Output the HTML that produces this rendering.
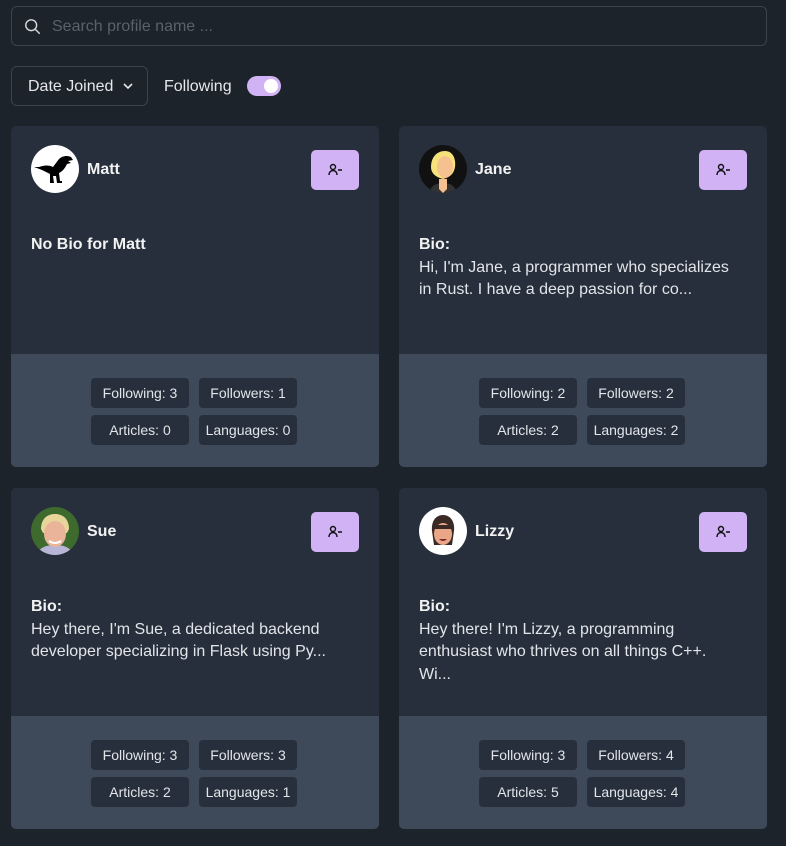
<!DOCTYPE html>
<html><head><meta charset="utf-8"><style>
*{box-sizing:border-box;margin:0;padding:0}
body{width:786px;height:846px;background:#1d232a;font-family:"Liberation Sans",sans-serif;color:#e5e7eb;position:relative;overflow:hidden}
.search{position:absolute;left:11px;top:6px;width:756px;height:40px;border:1px solid #3b434d;border-radius:6px}
.search svg{position:absolute;left:12px;top:11px}
.search span{position:absolute;left:40px;top:11px;font-size:16px;color:#59616b}
.dd{position:absolute;left:11px;top:66px;width:137px;height:40px;border:1px solid #3b434d;border-radius:6px;font-size:16px;padding:11px 0 0 16px;color:#e5e7eb}
.dd svg{position:absolute;left:111px;top:16px}
.fl{position:absolute;left:164px;top:78px;font-size:16px}
.tg{position:absolute;left:247px;top:76px;width:34px;height:20px;border-radius:10px;background:#d1b3f5}
.tg i{position:absolute;right:3px;top:3px;width:14px;height:14px;border-radius:50%;background:#fff}
.card{position:absolute;width:368px;height:341px;background:#262f3b;border-radius:5px;overflow:hidden}
.av{position:absolute;left:20px;top:19px;width:48px;height:48px;border-radius:50%;overflow:hidden}
.nm{position:absolute;left:76px;top:35px;font-size:16px;font-weight:bold;color:#f2f2f2}
.btn{position:absolute;left:300px;top:24px;width:48px;height:40px;border-radius:5px;background:#d1b3f5}
.btn svg{position:absolute;left:16px;top:12px}
.bio{position:absolute;left:20px;top:108px;width:320px;font-size:16px;line-height:22.5px;color:#e2e5e9}
.bio b{color:#f2f2f2}
.ft{position:absolute;left:0;top:228px;width:368px;height:113px;background:#3e4a5a}
.p{position:absolute;width:98px;height:30px;background:#262f3b;border-radius:4px;font-size:14px;text-align:center;line-height:30px;color:#e2e5e9}
</style></head><body>
<div class="search"><svg width="18" height="18" viewBox="0 0 20 20" fill="none" stroke="#d6d9dd" stroke-width="1.6"><circle cx="8" cy="8" r="6"/><path d="M12.5 12.5l5 5"/></svg><span>Search profile name ...</span></div>
<div class="dd">Date Joined<svg width="10" height="7" viewBox="0 0 10 7" fill="none" stroke="#e5e7eb" stroke-width="1.6"><path d="M1 1l4 4 4-4"/></svg></div>
<div class="fl">Following</div><div class="tg"><i></i></div>

<div class="card" style="left:11px;top:126px">
<div class="av" style="background:#fff"><svg width="48" height="48" viewBox="0 0 48 48"><path d="M8 22c6-2 10-2 14 0l6-8c3-3 8-4 12-2l2 3-5 1 3 2-4 1c-2 4-4 7-8 9l1 8h2l0 2h-5l-1-7-3 0 1 7h-4l0-9c-4-2-7-4-16-7z" fill="#000"/></svg></div>
<div class="nm">Matt</div><div class="btn"><svg width="16" height="16" viewBox="0 0 16 16" fill="none" stroke="#111" stroke-width="1.4"><circle cx="6" cy="5" r="2.5"/><path d="M2 13c0-3 2-4.5 4-4.5s4 1.5 4 4.5M11 8h4"/></svg></div>
<div class="bio"><b>No Bio for Matt</b></div>
<div class="ft"><div class="p" style="left:80px;top:24px">Following: 3</div><div class="p" style="left:188px;top:24px">Followers: 1</div><div class="p" style="left:80px;top:61px">Articles: 0</div><div class="p" style="left:188px;top:61px">Languages: 0</div></div>
</div>

<div class="card" style="left:399px;top:126px">
<div class="av" style="background:#111"><svg width="48" height="48" viewBox="0 0 48 48"><path d="M10 48c2-8 8-10 14-10s12 2 14 10z" fill="#333"/><path d="M20 34h8v10l-4 4-4-4z" fill="#f5c18f"/><path d="M12 22c0-10 6-16 14-16s11 8 10 16c-1 6-4 10-12 12-8-2-12-6-12-12z" fill="#f6e27a"/><ellipse cx="26" cy="22" rx="8" ry="11" fill="#f5c18f"/></svg></div>
<div class="nm">Jane</div><div class="btn"><svg width="16" height="16" viewBox="0 0 16 16" fill="none" stroke="#111" stroke-width="1.4"><circle cx="6" cy="5" r="2.5"/><path d="M2 13c0-3 2-4.5 4-4.5s4 1.5 4 4.5M11 8h4"/></svg></div>
<div class="bio"><b>Bio:</b><br>Hi, I'm Jane, a programmer who specializes in Rust. I have a deep passion for co...</div>
<div class="ft"><div class="p" style="left:80px;top:24px">Following: 2</div><div class="p" style="left:188px;top:24px">Followers: 2</div><div class="p" style="left:80px;top:61px">Articles: 2</div><div class="p" style="left:188px;top:61px">Languages: 2</div></div>
</div>

<div class="card" style="left:11px;top:488px">
<div class="av" style="background:#3e6a2e"><svg width="48" height="48" viewBox="0 0 48 48"><path d="M6 48c2-8 10-10 18-10s16 2 18 10z" fill="#b8b6d8"/><path d="M10 22c0-10 6-15 14-15s14 5 14 15l-2 4H12z" fill="#e8d59a"/><ellipse cx="24" cy="27" rx="11" ry="13" fill="#eab49a"/><path d="M18 34q6 4 12 0" stroke="#fff" stroke-width="2" fill="none"/></svg></div>
<div class="nm">Sue</div><div class="btn"><svg width="16" height="16" viewBox="0 0 16 16" fill="none" stroke="#111" stroke-width="1.4"><circle cx="6" cy="5" r="2.5"/><path d="M2 13c0-3 2-4.5 4-4.5s4 1.5 4 4.5M11 8h4"/></svg></div>
<div class="bio"><b>Bio:</b><br>Hey there, I'm Sue, a dedicated backend developer specializing in Flask using Py...</div>
<div class="ft"><div class="p" style="left:80px;top:24px">Following: 3</div><div class="p" style="left:188px;top:24px">Followers: 3</div><div class="p" style="left:80px;top:61px">Articles: 2</div><div class="p" style="left:188px;top:61px">Languages: 1</div></div>
</div>

<div class="card" style="left:399px;top:488px">
<div class="av" style="background:#fff"><svg width="48" height="48" viewBox="0 0 48 48"><path d="M13 24c-1-10 4-16 11-16s12 6 11 16l-2 14H15z" fill="#3a2a26"/><ellipse cx="24" cy="27" rx="9" ry="11" fill="#e9a788"/><path d="M15 18h18v4H15z" fill="#3a2a26"/><path d="M20 32q4 4 8 0z" fill="#7a2a2a"/></svg></div>
<div class="nm">Lizzy</div><div class="btn"><svg width="16" height="16" viewBox="0 0 16 16" fill="none" stroke="#111" stroke-width="1.4"><circle cx="6" cy="5" r="2.5"/><path d="M2 13c0-3 2-4.5 4-4.5s4 1.5 4 4.5M11 8h4"/></svg></div>
<div class="bio"><b>Bio:</b><br>Hey there! I'm Lizzy, a programming enthusiast who thrives on all things C++. Wi...</div>
<div class="ft"><div class="p" style="left:80px;top:24px">Following: 3</div><div class="p" style="left:188px;top:24px">Followers: 4</div><div class="p" style="left:80px;top:61px">Articles: 5</div><div class="p" style="left:188px;top:61px">Languages: 4</div></div>
</div>
</body></html>
